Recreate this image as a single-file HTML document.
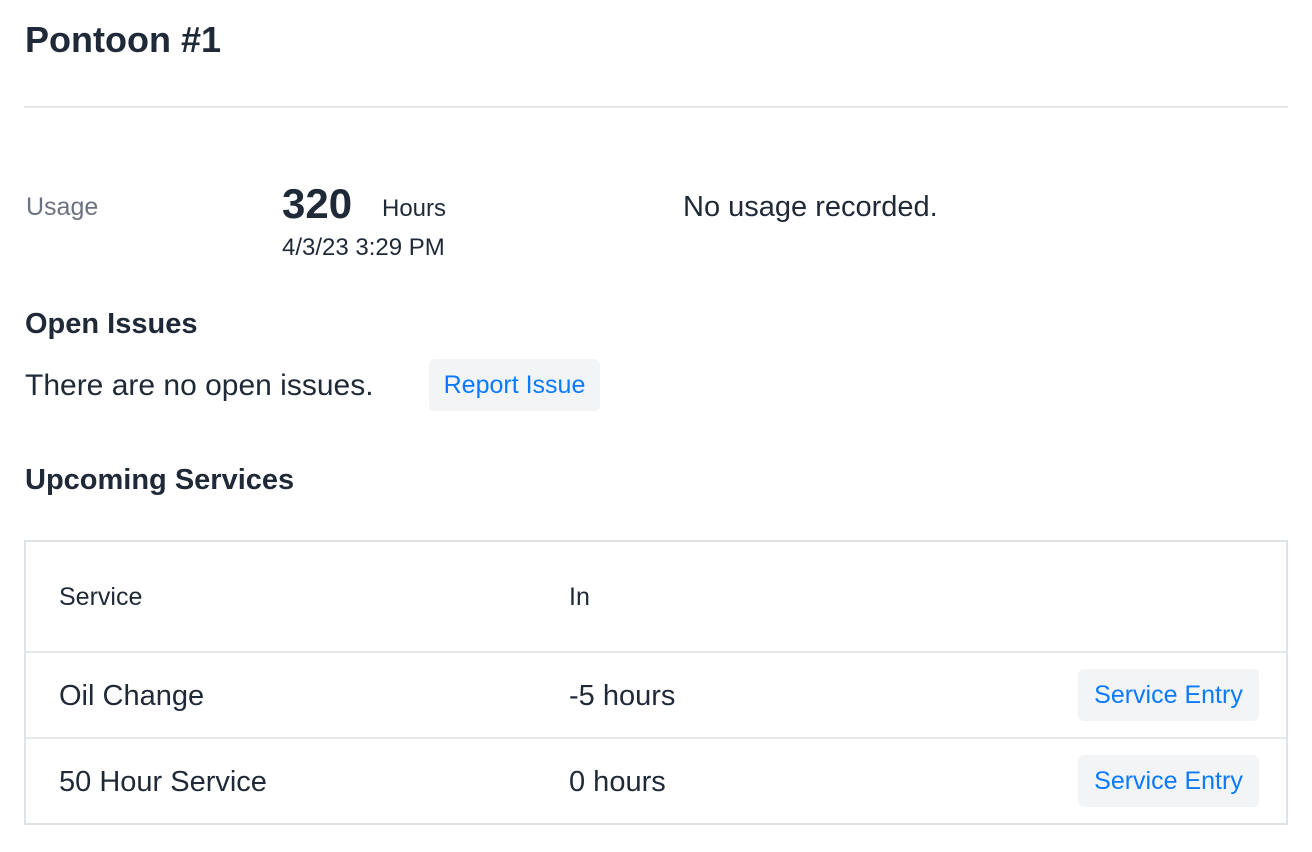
<!DOCTYPE html>
<html><head><meta charset="utf-8"><style>
*{margin:0;padding:0;box-sizing:border-box}
body{width:1312px;height:852px;background:#fff;font-family:"Liberation Sans",sans-serif;color:#1f2937;position:relative;overflow:hidden}
.a{position:absolute;white-space:nowrap;line-height:1}
.btn{position:absolute;background:#f3f4f6;border-radius:6px;color:#0a7aff;display:flex;align-items:center;justify-content:center;font-size:25px}
.line{position:absolute;background:#e5e7eb;height:2px}
</style></head><body>
<div class="a" style="left:25px;top:22px;font-size:36px;font-weight:bold">Pontoon #1</div>
<div class="line" style="left:24px;top:106px;width:1264px"></div>
<div class="a" style="left:26px;top:195px;font-size:25px;color:#6b7280">Usage</div>
<div class="a" style="left:282px;top:183px;font-size:42px;font-weight:bold">320</div>
<div class="a" style="left:382px;top:197px;font-size:24px">Hours</div>
<div class="a" style="left:282px;top:236px;font-size:24px">4/3/23 3:29 PM</div>
<div class="a" style="left:683px;top:193px;font-size:29px">No usage recorded.</div>
<div class="a" style="left:25px;top:310px;font-size:29px;font-weight:bold">Open Issues</div>
<div class="a" style="left:25px;top:371px;font-size:30px">There are no open issues.</div>
<div class="btn" style="left:429px;top:359px;width:171px;height:52px">Report Issue</div>
<div class="a" style="left:25px;top:466px;font-size:29px;font-weight:bold">Upcoming Services</div>
<div style="position:absolute;left:24px;top:540px;width:1264px;height:285px;border:2px solid #dfe2e6"></div>
<div class="line" style="left:25px;top:651px;width:1262px"></div>
<div class="line" style="left:25px;top:737px;width:1262px"></div>
<div class="a" style="left:59px;top:585px;font-size:25px">Service</div>
<div class="a" style="left:569px;top:585px;font-size:25px">In</div>
<div class="a" style="left:59px;top:682px;font-size:29px">Oil Change</div>
<div class="a" style="left:569px;top:682px;font-size:29px">-5 hours</div>
<div class="btn" style="left:1078px;top:669px;width:181px;height:52px">Service Entry</div>
<div class="a" style="left:59px;top:768px;font-size:29px">50 Hour Service</div>
<div class="a" style="left:569px;top:768px;font-size:29px">0 hours</div>
<div class="btn" style="left:1078px;top:755px;width:181px;height:52px">Service Entry</div>
</body></html>
